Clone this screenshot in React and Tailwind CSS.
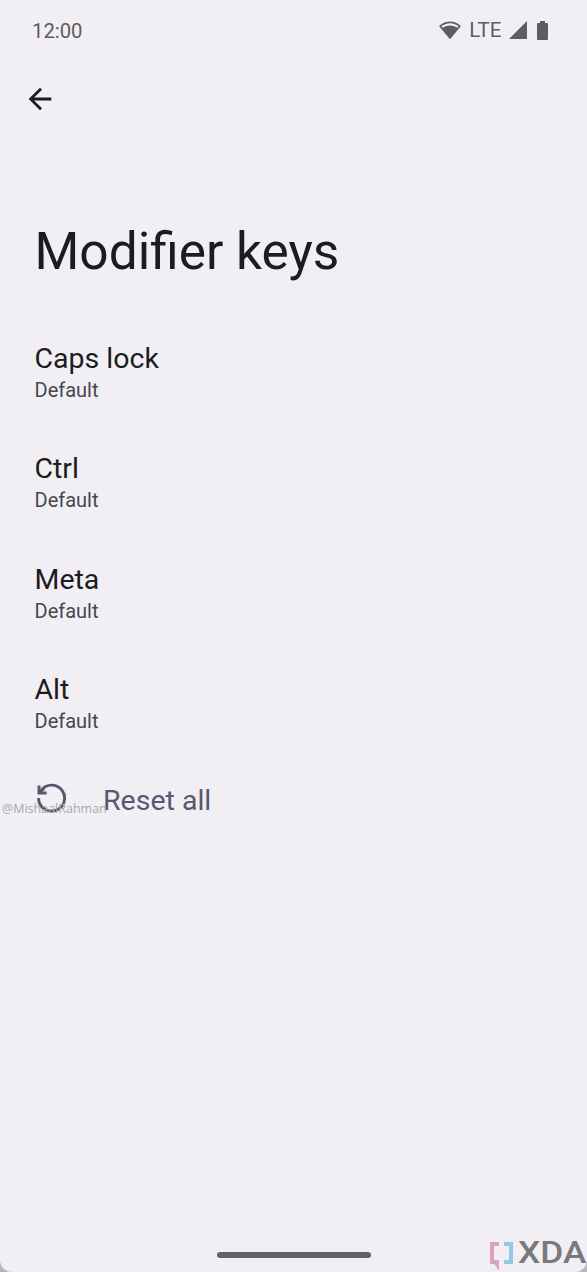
const modifierKeys = [
  { name: "Caps lock", value: "Default" },
  { name: "Ctrl", value: "Default" },
  { name: "Meta", value: "Default" },
  { name: "Alt", value: "Default" },
];

function StatusBar() {
  return (
    <header className="flex h-[60px] items-center justify-between pl-8 pr-[39.5px] text-[#5d5c5f]">
      <span className="mt-0.5 text-[20.3px] leading-6 font-[450]">12:00</span>
      <div className="flex items-center">
        {/* Wifi */}
        <svg className="h-[18px] w-[22px]" viewBox="0 0 22 18">
          <path
            d="M1.3 5.2C7 .1 15 .1 20.7 5.2L11 16.9Z"
            fill="none"
            stroke="currentColor"
            strokeWidth="1.8"
            strokeLinejoin="round"
          />
          <path d="M3 7.2C8 3.6 14 3.6 19 7.2L11 17.5Z" fill="currentColor" />
        </svg>
        <span className="ml-[8px] text-[20.5px] leading-6">LTE</span>
        {/* Signal */}
        <svg className="ml-[7px] h-[18px] w-[18px]" viewBox="0 0 18 18">
          <path d="M18 0v18H0z" fill="currentColor" />
        </svg>
        {/* Battery */}
        <svg className="ml-[10px] h-[19px] w-[11px]" viewBox="0 0 11 19">
          <path
            d="M3 0h5v2h2q1 0 1 1v15q0 1-1 1H1q-1 0-1-1V3q0-1 1-1h2z"
            fill="currentColor"
          />
        </svg>
      </div>
    </header>
  );
}

function PreferenceRow({ name, value }) {
  return (
    <li>
      <h2 className="text-[28.5px] leading-8 text-[#1c1b1e]">{name}</h2>
      <p className="mt-[3.3px] text-[20px] leading-6 text-[#48474b]">{value}</p>
    </li>
  );
}

function ResetIcon() {
  return (
    <svg
      className="mb-[5px] h-8 w-8"
      viewBox="0 0 32 32"
      fill="none"
      stroke="currentColor"
      strokeWidth="2.9"
    >
      <path d="M3.6 16A13 13 0 1 0 6 8.6L4.6 10.6" />
      <path d="M4 3.6v7.4h7.6" />
      <path d="M4 11l5-4.5" />
    </svg>
  );
}

function XdaLogo() {
  return (
    <div className="absolute right-0 bottom-0 flex h-8 w-[98px]">
      <svg className="h-8 w-6 shrink-0" viewBox="0 0 24 32" fill="none">
        <path d="M10 4H3v18h7" stroke="#dfa0b9" strokeWidth="4" />
        <path d="M4 22h6v9z" fill="#dfa0b9" />
        <path d="M15 4h7v18h-7" stroke="#8fcbe3" strokeWidth="4" />
      </svg>
      <span className="ml-[5px] block origin-left scale-x-[1.12] text-[31.5px] leading-[26px] font-medium text-[#79787b]">
        XDA
      </span>
    </div>
  );
}

export default function App() {
  return (
    <div className="h-[1272px] w-[587px] overflow-hidden bg-[#b5b4b8] font-[Roboto,sans-serif]">
      <div className="relative flex h-full flex-col rounded-b-[12px] bg-[#f1eff3]">
        <StatusBar />

        <nav className="flex h-[78px] items-center pl-[23px]">
          <button aria-label="Back" className="text-[#1c1b1e]">
            <svg className="h-[34px] w-[34px]" viewBox="0 0 24 24">
              <path
                d="M20 11H7.83l5.59-5.59L12 4l-8 8 8 8 1.41-1.41L7.83 13H20z"
                fill="currentColor"
              />
            </svg>
          </button>
        </nav>

        <main className="flex-1 px-[34.5px] pt-[84px]">
          <h1 className="text-[51.4px] leading-[60px] text-[#1c1b1e]">
            Modifier keys
          </h1>

          <ul className="mt-[60.6px] flex flex-col gap-[51.2px]">
            {modifierKeys.map((key) => (
              <PreferenceRow key={key.name} name={key.name} value={key.value} />
            ))}
          </ul>

          <button className="mt-[48.7px] flex items-center text-[#5a566f]">
            <ResetIcon />
            <span className="ml-[36.5px] text-[28.5px] leading-8">Reset all</span>
          </button>
        </main>

        <footer className="flex justify-center pb-[14px]">
          <div className="h-[6px] w-[154px] rounded-full bg-[#626164]" />
        </footer>

        <span className="absolute top-[801px] left-[2px] font-['Open_Sans',sans-serif] text-[12.5px] leading-4 text-[#a9a7ad]">
          @MishaalRahman
        </span>
        <XdaLogo />
      </div>
    </div>
  );
}
